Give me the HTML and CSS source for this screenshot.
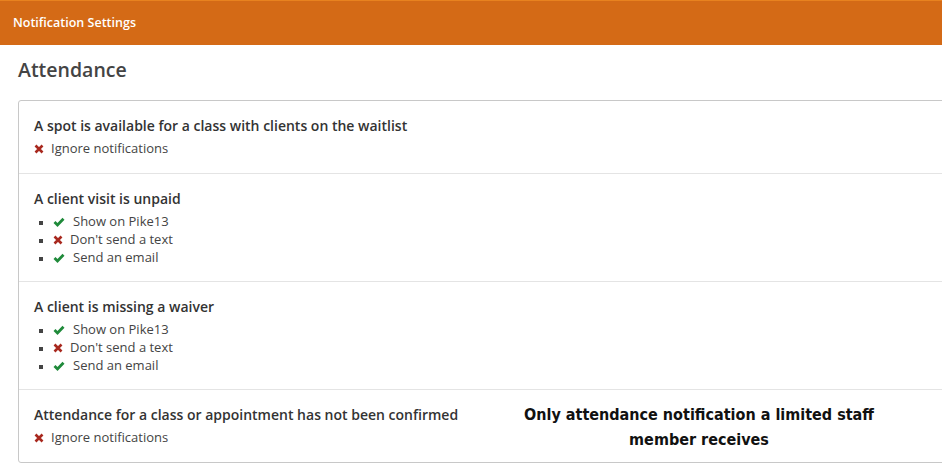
FILE: index.html
```html
<!DOCTYPE html>
<html lang="en">

<head>
    <meta charset="UTF-8">
    <meta name="viewport" content="width=device-width, initial-scale=1.0">
    <link rel="stylesheet" href="styles.css">
</head>
<body>
	<div class="topbar">Notification Settings</div>

	<div class="content">
		<h2>Attendance</h2>

		<div class="card">
			<div class="row">
				<h3>A spot is available for a class with clients on the waitlist</h3>
				<div class="setting"><svg class="icon-x" viewBox="0 0 10 10"><path d="M1.5 1.5 L8.5 8.5 M8.5 1.5 L1.5 8.5"/></svg>Ignore notifications</div>
			</div>

			<div class="row">
				<h3>A client visit is unpaid</h3>
				<ul class="settings">
					<li><svg class="icon-check" viewBox="0 0 12 10"><path d="M1.5 5 L4.5 8 L10.5 1.8"/></svg>Show on Pike13</li>
					<li><svg class="icon-x" viewBox="0 0 10 10"><path d="M1.5 1.5 L8.5 8.5 M8.5 1.5 L1.5 8.5"/></svg>Don't send a text</li>
					<li><svg class="icon-check" viewBox="0 0 12 10"><path d="M1.5 5 L4.5 8 L10.5 1.8"/></svg>Send an email</li>
				</ul>
			</div>

			<div class="row">
				<h3>A client is missing a waiver</h3>
				<ul class="settings">
					<li><svg class="icon-check" viewBox="0 0 12 10"><path d="M1.5 5 L4.5 8 L10.5 1.8"/></svg>Show on Pike13</li>
					<li><svg class="icon-x" viewBox="0 0 10 10"><path d="M1.5 1.5 L8.5 8.5 M8.5 1.5 L1.5 8.5"/></svg>Don't send a text</li>
					<li><svg class="icon-check" viewBox="0 0 12 10"><path d="M1.5 5 L4.5 8 L10.5 1.8"/></svg>Send an email</li>
				</ul>
			</div>

			<div class="row last">
				<h3>Attendance for a class or appointment has not been confirmed</h3>
				<div class="setting"><svg class="icon-x" viewBox="0 0 10 10"><path d="M1.5 1.5 L8.5 8.5 M8.5 1.5 L1.5 8.5"/></svg>Ignore notifications</div>
				<p class="note">Only attendance notification a limited staff member receives</p>
			</div>
		</div>
	</div>
</body>

</html>
```

FILE: styles.css
```css
body {
    font-family: "Open Sans", Lato, sans-serif;
    background-color: #fff;
    margin: 0;
    padding: 0;
    color: #444;
    overflow: hidden;
}

.topbar {
    height: 44px;
    line-height: 44px;
    padding-left: 13px;
    background-color: #d46a16;
    border-top: 1px solid #e8821f;
    color: #fff;
    font-size: 12.5px;
    font-weight: 600;
}

.content {
    padding: 0 0 0 18px;
}

h2 {
    margin: 0;
    height: 55px;
    line-height: 49px;
    font-size: 19.5px;
    font-weight: 600;
    color: #444;
}

.card {
    width: 940px;
    border: 1px solid #c8c8c8;
    border-radius: 3px;
}

.row {
    padding: 16px 15px;
    border-bottom: 1px solid #e4e4e4;
}

.row.last {
    border-bottom: none;
    position: relative;
}

h3 {
    margin: 0 0 4px 0;
    font-size: 14px;
    line-height: 18px;
    font-weight: 600;
    color: #333;
}

.setting,
.settings li {
    font-size: 13px;
    line-height: 18px;
    color: #444;
}

.settings {
    margin: 0 0 -1px 0;
    padding-left: 19px;
    list-style-type: square;
}

.settings li::marker {
    color: #444;
    font-size: 10px;
}

svg {
    display: inline-block;
    vertical-align: -1px;
    fill: none;
    stroke-linecap: butt;
}

.icon-x {
    width: 10px;
    height: 10px;
    margin-right: 7px;
    stroke: #a8281e;
    stroke-width: 2.6;
}

.icon-check {
    width: 12px;
    height: 10px;
    margin-right: 8px;
    stroke: #1f8a3a;
    stroke-width: 2.8;
}

.note {
    position: absolute;
    left: 480px;
    top: 12px;
    width: 400px;
    margin: 0;
    text-align: center;
    font-family: "DejaVu Sans Condensed", "DejaVu Sans", sans-serif;
    font-weight: bold;
    font-size: 16px;
    line-height: 25px;
    color: #111;
}
```
